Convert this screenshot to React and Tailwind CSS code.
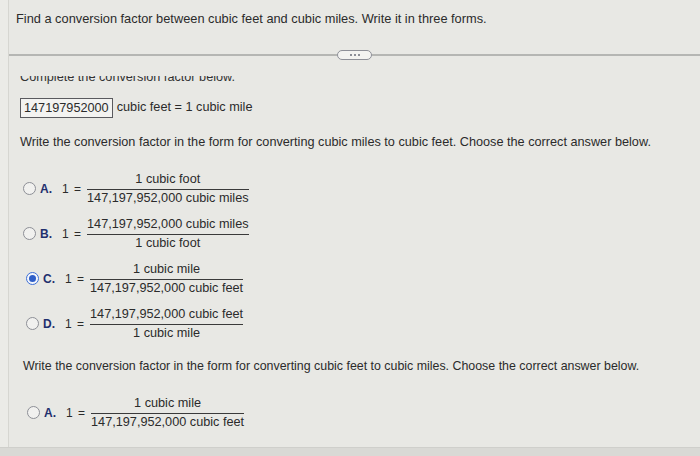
import React from "react";

function Radio({ selected }) {
  return selected ? (
    <span className="flex h-[13px] w-[13px] items-center justify-center rounded-full border-[1.5px] border-[#3d6fd6] bg-[#f4f6fb]">
      <span className="h-[7px] w-[7px] rounded-full bg-[#2f5fc8]" />
    </span>
  ) : (
    <span className="h-[13px] w-[13px] rounded-full border-[1.5px] border-[#8d8f96] bg-[#f1f1ef]" />
  );
}

function Fraction({ num, den }) {
  return (
    <span className="inline-flex flex-col items-stretch text-center">
      <span className="border-b border-[#3a3a3a] pb-[3px] leading-[14px]">{num}</span>
      <span className="pt-[1px] leading-[14px]">{den}</span>
    </span>
  );
}

function Option({ letter, selected, num, den, className = "" }) {
  return (
    <div className={"flex items-center " + className}>
      <Radio selected={selected} />
      <span className="ml-[4px] w-[18px] text-[12px] font-bold text-[#1f2f6e]">{letter}.</span>
      <span className="ml-[4px] mr-[5px] text-[12px] tracking-[1px]">1 =</span>
      <Fraction num={num} den={den} />
    </div>
  );
}

export default function App() {
  return (
    <div className="flex h-[456px] w-[700px] flex-col overflow-hidden bg-[#e8e8e4] font-['Liberation_Sans',Arial,sans-serif] text-[12.7px] text-[#2b2b2b]">
      <div className="flex flex-1">
        <div className="w-[9px] border-r border-[#d6d6d1] bg-[#ebebe7]" />
        <div className="flex flex-1 flex-col">
          <div className="pl-[7px] pt-[11px] text-[12.8px] leading-[15px]">
            Find a conversion factor between cubic feet and cubic miles. Write it in three forms.
          </div>
          <div className="mt-[24px] flex items-center">
            <div className="h-[1.5px] flex-1 bg-[#b5b6b3]" />
            <div className="flex h-[10px] w-[35px] items-center justify-center gap-[2px] rounded-full border border-[#8e9098] bg-[#f3f3f1]">
              <span className="h-[2px] w-[2px] rounded-full bg-[#6a6d78]" />
              <span className="h-[2px] w-[2px] rounded-full bg-[#6a6d78]" />
              <span className="h-[2px] w-[2px] rounded-full bg-[#6a6d78]" />
            </div>
            <div className="h-[1.5px] flex-1 bg-[#b5b6b3]" />
          </div>
          <div className="mt-[16px] flex h-[9px] items-end overflow-hidden pl-[11px]">
            <span className="leading-[15px] text-[#333]">Complete the conversion factor below.</span>
          </div>
          <div className="mt-[13px] flex items-center pl-[11px]">
            <span className="border border-[#5a5a5e] bg-[#f3f3f1] px-[3px] leading-[18px]">147197952000</span>
            <span className="ml-[4px]">cubic feet = 1 cubic mile</span>
          </div>
          <div className="mt-[17px] pl-[11px] leading-[15px]">
            Write the conversion factor in the form for converting cubic miles to cubic feet. Choose the correct answer below.
          </div>
          <div className="mt-[22px] flex flex-col gap-[12px] pl-[14px]">
            <Option letter="A" num="1 cubic foot" den="147,197,952,000 cubic miles" />
            <Option letter="B" num="147,197,952,000 cubic miles" den="1 cubic foot" />
            <Option letter="C" selected num="1 cubic mile" den="147,197,952,000 cubic feet" className="pl-[3px]" />
            <Option letter="D" num="147,197,952,000 cubic feet" den="1 cubic mile" className="pl-[3px]" />
          </div>
          <div className="mt-[19px] pl-[14px] text-[12.4px] leading-[15px]">
            Write the conversion factor in the form for converting cubic feet to cubic miles. Choose the correct answer below.
          </div>
          <div className="mt-[22px] pl-[18px]">
            <Option letter="A" num="1 cubic mile" den="147,197,952,000 cubic feet" />
          </div>
        </div>
      </div>
      <div className="h-[9px] border-t border-[#cfcfcb] bg-[#d9d9d5]" />
    </div>
  );
}
